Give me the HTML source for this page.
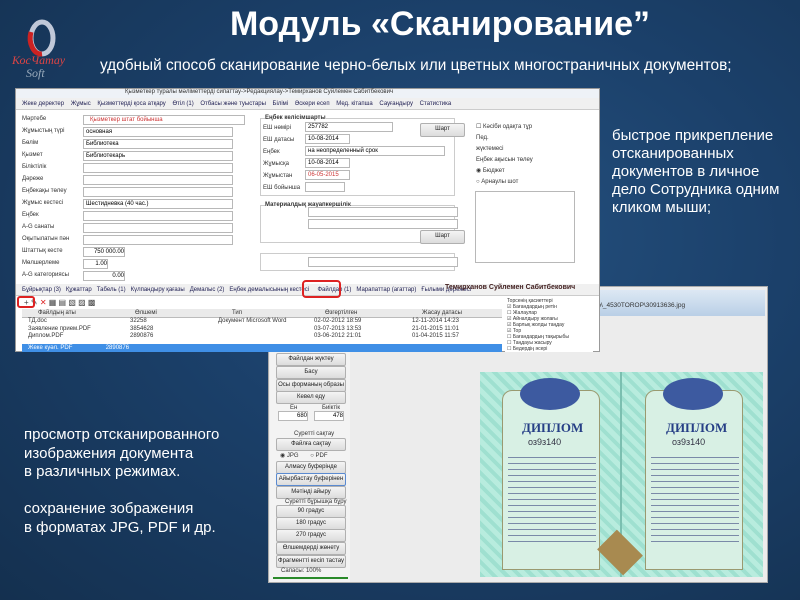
<!DOCTYPE html>
<html><head><meta charset="utf-8">
<style>
*{margin:0;padding:0;box-sizing:border-box}
body{width:800px;height:600px;overflow:hidden;position:relative;font-family:"Liberation Sans",sans-serif;
background:radial-gradient(ellipse at 60% 40%,#24507e 0%,#1b406a 45%,#14304f 100%);}
.a{position:absolute}
.w{color:#fff}
.f{font-size:6px;color:#333;white-space:nowrap}
.inp{position:absolute;background:#fff;border:1px solid #b8b8b8;height:10px;line-height:8px;overflow:hidden}
.btn{position:absolute;background:linear-gradient(#f4f4f4,#dcdcdc);border:1px solid #b0b0b0;font-size:6px;color:#222;text-align:center;line-height:11px;height:13px;border-radius:2px;white-space:nowrap;overflow:hidden}
</style></head><body>
<!-- logo -->
<svg class="a" style="left:10px;top:18px" width="62" height="62" viewBox="0 0 62 62">
<ellipse cx="32" cy="20" rx="11" ry="16" fill="none" stroke="#c0c8d8" stroke-width="5"/>
<path d="M21 14 A11 16 0 0 0 32 36" fill="none" stroke="#c22" stroke-width="5"/>
<text x="2" y="46" font-family="Liberation Serif" font-style="italic" font-size="12" fill="#d44">КосЧатау</text>
<text x="16" y="59" font-family="Liberation Serif" font-style="italic" font-size="12" fill="#9ab">Soft</text>
</svg>
<div class="a w" style="left:0;width:880px;top:2px;text-align:center;font-size:34px;font-weight:bold;line-height:44px">Модуль «Сканирование”</div>
<div class="a w" style="left:100px;top:57px;font-size:15.4px">удобный способ сканирование черно-белых или цветных многостраничных документов;</div>

<div class="a w" style="left:612px;top:127px;font-size:15px;line-height:18px">быстрое прикрепление<br>отсканированных<br>документов в личное<br>дело Сотрудника одним<br>кликом мыши;</div>
<div class="a w" style="left:24px;top:426px;font-size:15px;line-height:18.5px">просмотр отсканированного<br>изображения документа<br>в различных режимах.<br><br>сохранение зображения<br>в форматах JPG, PDF и др.</div>

<!-- window 2 -->
<div class="a" style="left:268px;top:286px;width:500px;height:297px;background:#ececec;border:1px solid #aaa"></div>
<div class="a" style="left:590px;top:290px;width:175px;height:26px;background:linear-gradient(#dde8f4,#b9cfe6)"></div>
<div class="a f" style="left:592px;top:302px;font-size:6.5px">mp\_4530TOROP\30913636.jpg</div>
<div class="a" style="left:270px;top:352px;width:80px;height:230px;background:#f3f3f3"></div>
<div class="btn" style="left:276px;top:353px;width:70px">Файлдан жүктеу</div>
<div class="btn" style="left:276px;top:366px;width:70px">Басу</div>
<div class="btn" style="left:276px;top:379px;width:70px">Осы форманың образы</div>
<div class="btn" style="left:276px;top:391px;width:70px">Кевел еду</div>
<div class="a f" style="left:290px;top:405px">Ен</div><div class="a f" style="left:322px;top:405px">Биіктік</div>
<div class="inp" style="left:278px;top:411px;width:30px;font-size:6px;text-align:right">680</div>
<div class="inp" style="left:314px;top:411px;width:30px;font-size:6px;text-align:right">478</div>
<div class="a f" style="left:294px;top:431px">Суретті сақтау</div>
<div class="btn" style="left:276px;top:438px;width:70px">Файлға сақтау</div>
<div class="a f" style="left:280px;top:452px">◉ JPG &nbsp; &nbsp; &nbsp; ○ PDF</div>
<div class="btn" style="left:276px;top:461px;width:70px">Алмасу буферінде</div>
<div class="btn" style="left:276px;top:473px;width:70px;border-color:#5a8ad0">Айырбастау буферінен</div>
<div class="btn" style="left:276px;top:486px;width:70px">Мәтінді айыру</div>
<div class="a f" style="left:285px;top:499px">Суретті бұрышқа бұру</div>
<div class="btn" style="left:276px;top:505px;width:70px">90 градус</div>
<div class="btn" style="left:276px;top:517px;width:70px">180 градус</div>
<div class="btn" style="left:276px;top:529px;width:70px">270 градус</div>
<div class="btn" style="left:276px;top:542px;width:70px">Өлшемдерді жөнету</div>
<div class="btn" style="left:276px;top:555px;width:70px">Фрагментті кесіп тастау</div>
<div class="a f" style="left:281px;top:568px">Сапасы: 100%</div>
<div class="a" style="left:273px;top:577px;width:75px;height:2px;background:#2a8a2a"></div>

<!-- diploma -->
<div class="a" style="left:480px;top:372px;width:283px;height:205px;background:
repeating-linear-gradient(45deg,#9fe0d0 0 4px,#b8ecde 4px 9px),#a8e4d4"></div>
<div class="a" style="left:620px;top:372px;width:2px;height:205px;background:#7bbfb0"></div>
<div class="a" style="left:502px;top:390px;width:98px;height:180px;background:#d8f0e4;border:1px solid #9a9a70;border-radius:10px 10px 0 0"></div>
<div class="a" style="left:645px;top:390px;width:98px;height:180px;background:#d8f0e4;border:1px solid #9a9a70;border-radius:10px 10px 0 0"></div>
<div class="a" style="left:520px;top:378px;width:60px;height:32px;background:#3d5aa0;border-radius:50%"></div>
<div class="a" style="left:663px;top:378px;width:60px;height:32px;background:#3d5aa0;border-radius:50%"></div>
<div class="a" style="left:522px;top:420px;font-family:'Liberation Serif',serif;font-weight:bold;font-size:13px;color:#263f86">ДИПЛОМ</div>
<div class="a" style="left:666px;top:420px;font-family:'Liberation Serif',serif;font-weight:bold;font-size:13px;color:#263f86">ДИПЛОМ</div>
<div class="a" style="left:528px;top:437px;font-size:9px;color:#334">оз9з140</div>
<div class="a" style="left:672px;top:437px;font-size:9px;color:#334">оз9з140</div>
<div class="a" style="left:508px;top:452px;width:88px;height:95px;background:repeating-linear-gradient(#d8f0e4 0 5px,#7a8aa8 5px 6px)"></div>
<div class="a" style="left:651px;top:452px;width:88px;height:95px;background:repeating-linear-gradient(#d8f0e4 0 5px,#7a8aa8 5px 6px)"></div>
<div class="a" style="left:597px;top:535px;width:46px;height:35px;background:#a88a50;transform:rotate(45deg) scale(.8)"></div>

<!-- window 1 -->
<div class="a" style="left:15px;top:88px;width:585px;height:264px;background:#fff;border:1px solid #999"></div>
<div class="a" style="left:16px;top:89px;width:583px;height:9px;background:#eef2f7"></div>
<div class="a f" style="left:125px;top:89px">Қызметкер туралы мәліметтерді сипаттау-&gt;Редакциялау-&gt;Темирханов Суйлемен Сабитбекович</div>
<div class="a" style="left:16px;top:98px;width:583px;height:12px;background:#f0f0f0;border-bottom:1px solid #ccc"></div>
<div class="a f" style="left:22px;top:101px;color:#225">Жеке деректер &nbsp;&nbsp; Жұмыс &nbsp;&nbsp; Қызметтерді қоса атқару &nbsp;&nbsp; Өтіл (1) &nbsp;&nbsp; Отбасы және туыстары &nbsp;&nbsp; Білімі &nbsp;&nbsp; Әскери есеп &nbsp;&nbsp; Мед. кітапша &nbsp;&nbsp; Сауғандыру &nbsp;&nbsp; Статистика</div>
<div class="a f" style="left:22px;top:113px;line-height:12px">Мәртебе<br>Жұмыстың түрі<br>Бөлім<br>Қызмет<br>Біліктілік<br>Дәреже<br>Еңбекақы төлеу<br>Жұмыс кестесі<br>Еңбек<br>А-G санаты<br>Оқытылатын пән<br>Штаттық кесте<br>Мөлшерлеме<br>А-G категориясы</div>
<div class="inp" style="left:83px;top:115px;width:162px;font-size:6px;color:#c33;padding-left:6px">Қызметкер штат бойынша</div>
<div class="inp" style="left:83px;top:127px;width:150px;font-size:6px;padding-left:2px">основная</div>
<div class="inp" style="left:83px;top:139px;width:150px;font-size:6px;padding-left:2px">Библиотека</div>
<div class="inp" style="left:83px;top:151px;width:150px;font-size:6px;padding-left:2px">Библиотекарь</div>
<div class="inp" style="left:83px;top:163px;width:150px"></div>
<div class="inp" style="left:83px;top:175px;width:150px"></div>
<div class="inp" style="left:83px;top:187px;width:150px"></div>
<div class="inp" style="left:83px;top:199px;width:150px;font-size:6px;padding-left:2px">Шестидневка (40 час.)</div>
<div class="inp" style="left:83px;top:211px;width:150px"></div>
<div class="inp" style="left:83px;top:223px;width:150px"></div>
<div class="inp" style="left:83px;top:235px;width:150px"></div>
<div class="inp" style="left:83px;top:247px;width:42px;font-size:6px;text-align:right">750 000.00</div>
<div class="inp" style="left:83px;top:259px;width:25px;font-size:6px;text-align:right">1.00</div>
<div class="inp" style="left:83px;top:271px;width:42px;font-size:6px;text-align:right">0.00</div>
<div class="a" style="left:260px;top:118px;width:195px;height:78px;border:1px solid #ccc"></div>
<div class="a f" style="left:265px;top:115px;background:#fff;font-weight:bold">Еңбек келісімшарты</div>
<div class="a f" style="left:263px;top:122px;line-height:12px">ЕШ нөмірі<br>ЕШ датасы<br>Еңбек<br>Жұмысқа<br>Жұмыстан<br>ЕШ бойынша</div>
<div class="inp" style="left:305px;top:122px;width:88px;font-size:6px;padding-left:2px">257782</div>
<div class="inp" style="left:305px;top:134px;width:45px;font-size:6px;padding-left:2px">10-08-2014</div>
<div class="inp" style="left:305px;top:146px;width:140px;font-size:6px;padding-left:2px">на неопределенный срок</div>
<div class="inp" style="left:305px;top:158px;width:45px;font-size:6px;padding-left:2px">10-08-2014</div>
<div class="inp" style="left:305px;top:170px;width:45px;font-size:6px;padding-left:2px;color:#c33">06-05-2015</div>
<div class="inp" style="left:305px;top:182px;width:40px"></div>
<div class="btn" style="left:420px;top:123px;width:45px;height:14px">Шарт</div>
<div class="a" style="left:260px;top:205px;width:195px;height:38px;border:1px solid #ccc"></div>
<div class="a f" style="left:265px;top:202px;background:#fff;font-weight:bold">Материалдық жауапкершілік</div>
<div class="inp" style="left:308px;top:207px;width:150px"></div>
<div class="inp" style="left:308px;top:219px;width:150px"></div>
<div class="btn" style="left:420px;top:230px;width:45px;height:14px">Шарт</div>
<div class="a" style="left:260px;top:253px;width:195px;height:18px;border:1px solid #ccc"></div>
<div class="inp" style="left:308px;top:257px;width:150px"></div>
<div class="a f" style="left:476px;top:122px;line-height:11px">☐ Кәсіби одақта тұр<br>Пед.<br>жүктемесі<br>Еңбек ақысын төлеу<br>◉ Бюджет<br>○ Арнаулы шот</div>
<div class="inp" style="left:475px;top:191px;width:100px;height:72px"></div>
<div class="a" style="left:16px;top:284px;width:583px;height:12px;background:#f0f0f0;border-bottom:1px solid #ccc"></div>
<div class="a f" style="left:22px;top:287px;color:#225">Бұйрықтар (3) &nbsp; Құжаттар &nbsp; Табель (1) &nbsp; Күлпандыру қағазы &nbsp; Демалыс (2) &nbsp; Еңбек демалысының кестесі &nbsp; &nbsp; Файлдар (1) &nbsp; Марапаттар (агаттар) &nbsp; Ғылыми дәрежесі</div>
<div class="a" style="left:302px;top:280px;width:39px;height:18px;border:2px solid #d22;border-radius:4px"></div>
<div class="a" style="left:445px;top:284px;font-size:7px;font-weight:bold;color:#422">Темирханов Суйлемен Сабитбекович</div>
<div class="a f" style="left:24px;top:298px;font-size:8px;color:#444">+ ✎ <span style="color:#d22">✕</span> ▦ ▤ ▧ ▨ ▩</div>
<div class="a" style="left:17px;top:296px;width:18px;height:12px;border:2px solid #d22;border-radius:3px"></div>
<div class="a" style="left:505px;top:297px;width:88px;height:55px;background:#fff"></div>
<div class="a f" style="left:507px;top:298px;line-height:6px;font-size:5px">Торсенің қасиеттері<br>☑ Бағандардың ретін<br>☐ Жалаулар<br>☑ Айналдыру жолағы<br>☑ Барлық жолды таңдау<br>☑ Тор<br>☐ Бағандардың тақырыбы<br>☐ Таңдауы жасыру<br>☐ Бедердің әсері</div>
<div class="a" style="left:22px;top:309px;width:480px;height:9px;background:#eaeaea;border-bottom:1px solid #bbb"></div>
<div class="a f" style="left:38px;top:310px">Файлдың аты</div><div class="a f" style="left:135px;top:310px">Өлшемі</div><div class="a f" style="left:232px;top:310px">Тип</div><div class="a f" style="left:325px;top:310px">Өзгертілген</div><div class="a f" style="left:422px;top:310px">Жасау датасы</div>
<div class="a f" style="left:28px;top:318px;line-height:7.6px">ТД.doc<br>Заявление прием.PDF<br>Диплом.PDF</div>
<div class="a f" style="left:130px;top:318px;line-height:7.6px">32258<br>3854628<br>2890876</div>
<div class="a f" style="left:218px;top:318px;line-height:7.6px">Документ Microsoft Word</div>
<div class="a f" style="left:314px;top:318px;line-height:7.6px">02-02-2012 18:59<br>03-07-2013 13:53<br>03-06-2012 21:01</div>
<div class="a f" style="left:412px;top:318px;line-height:7.6px">12-11-2014 14:23<br>21-01-2015 11:01<br>01-04-2015 11:57</div>
<div class="a" style="left:22px;top:344px;width:480px;height:8px;background:#3f8fe6"></div>
<div class="a f" style="left:28px;top:345px;color:#fff">Жеке куәл. PDF &nbsp;&nbsp;&nbsp;&nbsp;&nbsp;&nbsp;&nbsp;&nbsp;&nbsp;&nbsp;&nbsp;&nbsp;&nbsp;&nbsp;&nbsp;&nbsp;&nbsp;&nbsp; 2890876</div>
</body></html>
